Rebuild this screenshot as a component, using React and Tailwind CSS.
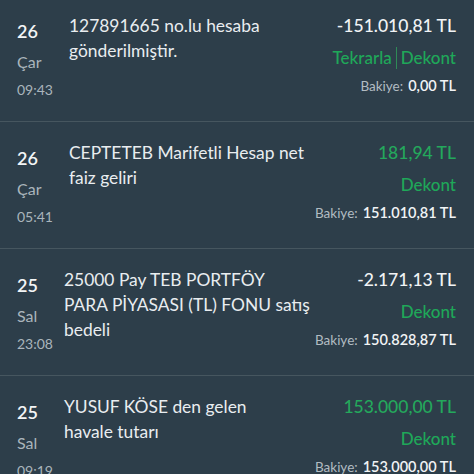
import React from "react";

const rows = [
  {
    day: "26",
    dayName: "Çar",
    time: "09:43",
    desc: ["127891665 no.lu hesaba", "gönderilmiştir."],
    amount: "-151.010,81 TL",
    positive: false,
    repeat: true,
    balance: "0,00 TL",
    descPad: "pl-[16px]",
  },
  {
    day: "26",
    dayName: "Çar",
    time: "05:41",
    desc: ["CEPTETEB Marifetli Hesap net", "faiz geliri"],
    amount: "181,94 TL",
    positive: true,
    repeat: false,
    balance: "151.010,81 TL",
    descPad: "pl-[16px]",
  },
  {
    day: "25",
    dayName: "Sal",
    time: "23:08",
    desc: ["25000 Pay TEB PORTFÖY", "PARA PİYASASI (TL) FONU satış", "bedeli"],
    amount: "-2.171,13 TL",
    positive: false,
    repeat: false,
    balance: "150.828,87 TL",
    descPad: "pl-[11px]",
  },
  {
    day: "25",
    dayName: "Sal",
    time: "09:19",
    desc: ["YUSUF KÖSE den gelen", "havale tutarı"],
    amount: "153.000,00 TL",
    positive: true,
    repeat: false,
    balance: "153.000,00 TL",
    descPad: "pl-[11px]",
  },
];

function Row({ r }) {
  return (
    <div className="flex h-[127px] border-b border-[#46565f] pl-[17px] pr-[18px] pt-[18px]">
      {/* Date */}
      <div className="flex w-[36px] shrink-0 flex-col pt-[6px]">
        <div className="text-[18px] font-semibold leading-[24px] text-[#f3f5f6]">{r.day}</div>
        <div className="mt-[7px] text-[16px] leading-[24px] text-[#aab5bc]">{r.dayName}</div>
        <div className="mt-[5px] text-[14px] leading-[22px] text-[#aab5bc]">{r.time}</div>
      </div>

      {/* Description */}
      <div className={`min-w-0 flex-1 ${r.descPad} pr-2 text-[17.4px] leading-[25px] text-[#e9edf0]`}>
        {r.desc.map((l, i) => (
          <div key={i} className="whitespace-nowrap">
            {l}
          </div>
        ))}
      </div>

      {/* Amount */}
      <div className="flex shrink-0 flex-col items-end">
        <div
          className={`text-[17.5px] font-medium leading-[25px] ${
            r.positive ? "text-[#24a85c]" : "text-[#f1f3f5]"
          }`}
        >
          {r.amount}
        </div>
        <div className="mt-[7px] flex items-center text-[17px] font-medium leading-[25px] text-[#1fa859]">
          {r.repeat && (
            <>
              <span>Tekrarla</span>
              <span className="mx-[4px] h-[22px] w-px bg-[#2f8a57]" />
            </>
          )}
          <span>Dekont</span>
        </div>
        <div className="mt-[6px] flex items-baseline gap-[5px] leading-[20px]">
          <span className="text-[13.5px] text-[#b2bcc2]">Bakiye:</span>
          <span className="text-[14.5px] font-semibold text-[#f1f3f5]">{r.balance}</span>
        </div>
      </div>
    </div>
  );
}

export default function App() {
  return (
    <div
      className="h-[474px] w-[474px] overflow-hidden bg-[#2d3e4a]"
      style={{ fontFamily: "Lato, 'Noto Sans', sans-serif" }}
    >
      <div className="mt-[-5px]">
        {rows.map((r, i) => (
          <Row key={i} r={r} />
        ))}
      </div>
    </div>
  );
}
